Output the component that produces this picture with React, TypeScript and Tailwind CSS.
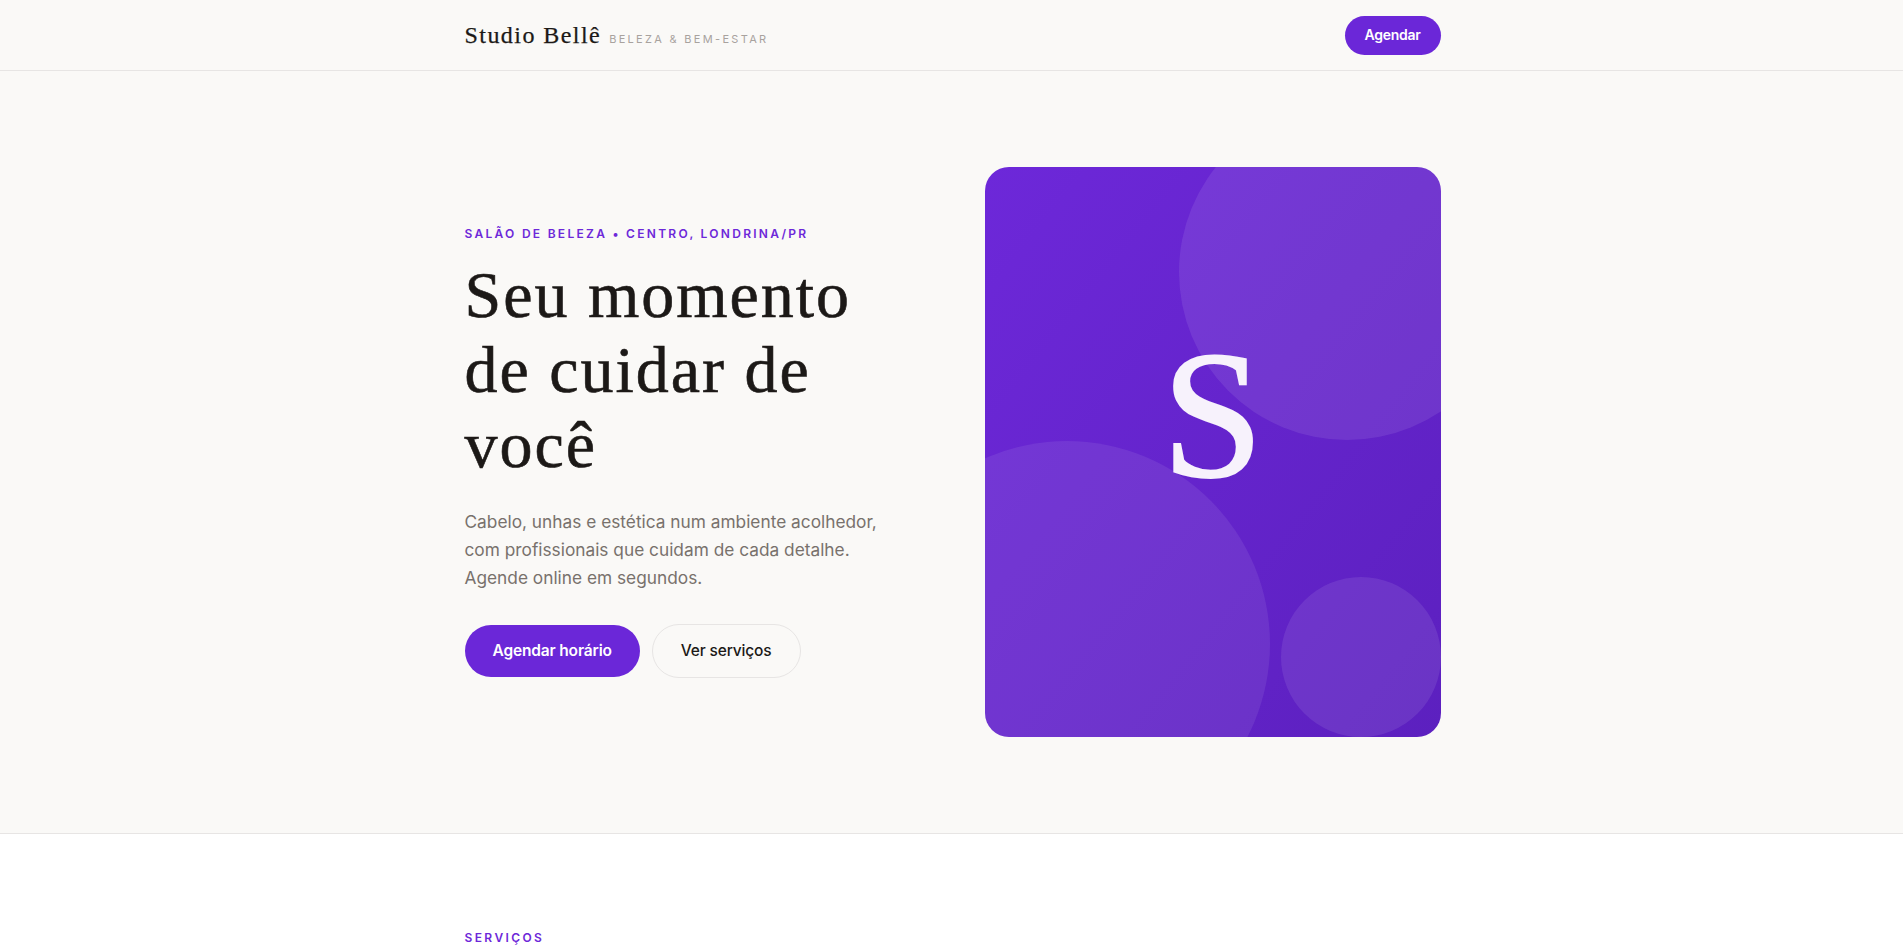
import React from "react";

const serif = "font-['Liberation_Serif','Times_New_Roman',serif]";
const sans = "font-['Inter','Liberation_Sans',sans-serif]";

function Header() {
  return (
    <header className="border-b border-[#e7e5e4] bg-[#faf9f7]">
      <div className="mx-auto flex h-[70px] max-w-[976px] translate-x-[1px] items-center justify-between">
        <a href="#" className="flex items-baseline gap-2">
          <span
            className={`${serif} text-[24px] leading-8 tracking-[0.06em] text-[#1c1917] [-webkit-text-stroke:0.25px_#1c1917]`}
          >
            Studio Bellê
          </span>
          <span className={`${sans} text-[11px] font-normal uppercase tracking-[0.21em] text-[#a8a29e]`}>
            Beleza &amp; Bem-estar
          </span>
        </a>
        <button
          className={`${sans} rounded-full bg-[#6b27d8] px-5 py-[9.5px] text-sm font-semibold leading-5 tracking-[-0.02em] text-white`}
        >
          Agendar
        </button>
      </div>
    </header>
  );
}

function HeroCard() {
  return (
    <div className="relative aspect-[4/5] w-full overflow-hidden rounded-3xl bg-gradient-to-br from-[#6d28d9] to-[#5c20bf]">
      <div className="absolute right-[-74px] top-[-63px] h-[336px] w-[336px] rounded-full bg-white/[0.09]" />
      <div className="absolute left-[-121px] top-[274px] h-[406px] w-[406px] rounded-full bg-white/[0.08]" />
      <div className="absolute bottom-0 right-0 h-[160px] w-[160px] rounded-full bg-white/[0.09]" />
      <div className="relative flex h-full items-center justify-center pb-[74px]">
        <span
          className={`${serif} text-[182px] leading-none text-[#f7f2fc] [-webkit-text-stroke:2px_#f7f2fc]`}
        >
          S
        </span>
      </div>
    </div>
  );
}

function Hero() {
  return (
    <section className="border-b border-[#e7e5e4] bg-[#faf9f7]">
      <div className="mx-auto grid max-w-[976px] translate-x-[1px] grid-cols-2 items-center gap-16 py-24">
        <div>
          <p className={`${sans} mb-[15px] text-xs font-semibold uppercase leading-4 tracking-[0.19em] text-[#6d28d9]`}>
            Salão de beleza • Centro, Londrina/PR
          </p>
          <h1
            className={`${serif} max-w-[450px] text-[66px] font-normal leading-[75px] tracking-[0.03em] text-[#1c1917] [-webkit-text-stroke:0.6px_#1c1917]`}
          >
            Seu momento de cuidar de você
          </h1>
          <p className={`${sans} mt-[26px] max-w-[440px] text-[17.3px] leading-7 text-[#78716c]`}>
            Cabelo, unhas e estética num ambiente acolhedor, com profissionais que cuidam de cada
            detalhe. Agende online em segundos.
          </p>
          <div className="mt-[32px] flex items-center gap-3">
            <a
              href="#"
              className={`${sans} rounded-full bg-[#6b27d8] px-7 py-3.5 text-[15.5px] font-semibold leading-6 tracking-[-0.01em] text-white`}
            >
              Agendar horário
            </a>
            <a
              href="#servicos"
              className={`${sans} rounded-full border border-[#e7e5e4] px-7 py-3.5 text-[15.5px] font-medium leading-6 tracking-[-0.01em] text-[#1c1917]`}
            >
              Ver serviços
            </a>
          </div>
        </div>
        <HeroCard />
      </div>
    </section>
  );
}

function Services() {
  return (
    <section id="servicos" className="bg-white">
      <div className="mx-auto max-w-[976px] translate-x-[1px] pb-24 pt-24">
        <p className={`${sans} text-xs font-semibold uppercase leading-4 tracking-[0.2em] text-[#6d28d9]`}>
          Serviços
        </p>
      </div>
    </section>
  );
}

export default function App() {
  return (
    <div className="min-h-screen bg-white">
      <Header />
      <Hero />
      <Services />
    </div>
  );
}
